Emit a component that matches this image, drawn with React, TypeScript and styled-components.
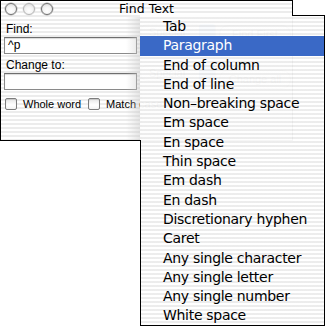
import React, { FC } from 'react';
import styled, { createGlobalStyle } from 'styled-components';

const GlobalStyle = createGlobalStyle`
  html, body {
    margin: 0;
    padding: 0;
    background: #fff;
  }
  body {
    font-family: "DejaVu Sans", "Liberation Sans", sans-serif;
    color: #000;
  }
`;

const pinstripe = (a = 1) =>
  `repeating-linear-gradient(to bottom, rgba(255,255,255,${a}) 0px, rgba(255,255,255,${a}) 2px, rgba(236,236,236,${a}) 2px, rgba(236,236,236,${a}) 4px)`;

const Stage = styled.div`
  position: relative;
  width: 327px;
  height: 328px;
  overflow: hidden;
  background: #fff;
`;

const Window = styled.div`
  position: relative;
  width: 291px;
  height: 139px;
  border: 1px solid #000;
  background: ${pinstripe()};
  display: flex;
  flex-direction: column;
`;

const TitleBar = styled.div`
  height: 16px;
  display: flex;
  align-items: center;
  position: relative;
  padding-left: 4px;
  gap: 6px;
`;

const Light = styled.span<{ $faint?: boolean }>`
  width: 10px;
  height: 10px;
  border-radius: 50%;
  border: 1px solid ${(p) => (p.$faint ? '#b4b4b4' : '#707070')};
  background: radial-gradient(circle at 50% 70%, #fff 0%, #f2f2f2 50%, #d4d4d4 100%);
  box-shadow: 0 0 0 0.5px ${(p) => (p.$faint ? '#dcdcdc' : '#b0b0b0')};
`;

const Title = styled.div`
  position: absolute;
  left: 0;
  right: 0;
  top: 1px;
  text-align: center;
  font-size: 12.5px;
  line-height: 14px;
  pointer-events: none;
`;

const Content = styled.div`
  flex: 1;
  display: grid;
  grid-template-columns: 133px 76px 72px;
  column-gap: 3px;
  padding: 3px 0 0 3px;
  align-content: start;
  font-family: "Liberation Sans", "DejaVu Sans", sans-serif;
`;

const FieldColumn = styled.div`
  display: flex;
  flex-direction: column;
`;

const Label = styled.div`
  font-size: 12px;
  line-height: 14px;
  padding: 2px 0 0 2px;
  height: 15px;
`;

const Field = styled.div`
  height: 15px;
  border: 1px solid #8a8a8a;
  border-top-color: #6e6e6e;
  background: #fff;
  box-shadow: inset 0 1px 1px rgba(0, 0, 0, 0.15);
  font-size: 12px;
  line-height: 15px;
  padding-left: 3px;
  margin-bottom: 2px;
`;

const GhostColumn = styled.div`
  display: flex;
  flex-direction: column;
  gap: 22px;
  padding-top: 1px;
`;

const Popup = styled.div`
  height: 14px;
  border: 1px solid #a8a8a8;
  border-radius: 7px 3px 3px 7px;
  background: #f4f4f4;
  font-size: 11px;
  line-height: 14px;
  padding-left: 8px;
  color: #444;
  position: relative;
  margin-top: 3px;
  &::after {
    content: '';
    position: absolute;
    right: 0;
    top: -1px;
    width: 16px;
    height: 16px;
    border-radius: 3px;
    background: #5f8fd6;
  }
`;

const GhostButton = styled.div`
  height: 17px;
  border: 1px solid #a8a8a8;
  border-radius: 9px;
  background: #f4f4f4;
  font-size: 11px;
  line-height: 17px;
  text-align: center;
  color: #555;
  margin-top: 4px;
`;

const Options = styled.div`
  grid-column: 1 / -1;
  display: flex;
  align-items: center;
  padding: 6px 0 0 1px;
  font-size: 11px;
`;

const Check = styled.span`
  width: 10px;
  height: 10px;
  border: 1px solid #7c7c7c;
  border-radius: 2px;
  background: linear-gradient(to bottom, #e6e6e6, #fff 60%, #f2f2f2);
  box-shadow: inset 0 1px 1px rgba(0, 0, 0, 0.15);
  margin-right: 6px;
`;

const OptionText = styled.span`
  margin-right: 7px;
`;

const MenuShade = styled.div`
  position: absolute;
  right: 150px;
  top: 16px;
  bottom: 0;
  width: 16px;
  background: linear-gradient(to right, rgba(255, 255, 255, 0), rgba(200, 200, 200, 0.55));
`;

const Menu = styled.ul`
  position: absolute;
  left: 140px;
  top: 15px;
  width: 185px;
  height: 311px;
  margin: 0;
  padding: 2px 0 0;
  list-style: none;
  box-sizing: border-box;
  border-right: 1px solid #000;
  border-bottom: 1px solid #000;
  background: ${pinstripe(0.965)};
  &::before {
    content: '';
    position: absolute;
    top: 0;
    left: 152px;
    right: 0;
    height: 1px;
    background: #000;
  }
  &::after {
    content: '';
    position: absolute;
    left: 0;
    top: 125px;
    bottom: 0;
    width: 1px;
    background: #000;
  }
`;

const Item = styled.li<{ $active?: boolean }>`
  height: 19.3px;
  line-height: 19px;
  padding-left: 23px;
  font-size: 14px;
  letter-spacing: -0.3px;
  white-space: nowrap;
  color: ${(p) => (p.$active ? '#fff' : '#000')};
  background: ${(p) => (p.$active ? '#3a69c6' : 'transparent')};
`;

const items = [
  'Tab',
  'Paragraph',
  'End of column',
  'End of line',
  'Non\u2013breaking space',
  'Em space',
  'En space',
  'Thin space',
  'Em dash',
  'En dash',
  'Discretionary hyphen',
  'Caret',
  'Any single character',
  'Any single letter',
  'Any single number',
  'White space',
];

const App: FC = () => (
  <Stage>
    <GlobalStyle />
    <Window>
      <TitleBar>
        <Light />
        <Light $faint />
        <Light />
        <Title>Find Text</Title>
      </TitleBar>
      <Content>
        <FieldColumn>
          <Label>Find:</Label>
          <Field>^p</Field>
          <Label>Change to:</Label>
          <Field />
        </FieldColumn>
        <GhostColumn>
          <Popup>Special</Popup>
          <Popup>Special</Popup>
        </GhostColumn>
        <GhostColumn>
          <GhostButton>Find First</GhostButton>
          <GhostButton>Change all</GhostButton>
        </GhostColumn>
        <Options>
          <Check />
          <OptionText>Whole word</OptionText>
          <Check />
          <OptionText>Match case</OptionText>
        </Options>
      </Content>
      <MenuShade />
    </Window>
    <Menu>
      {items.map((label) => (
        <Item key={label} $active={label === 'Paragraph'}>
          {label}
        </Item>
      ))}
    </Menu>
  </Stage>
);

export default App;
